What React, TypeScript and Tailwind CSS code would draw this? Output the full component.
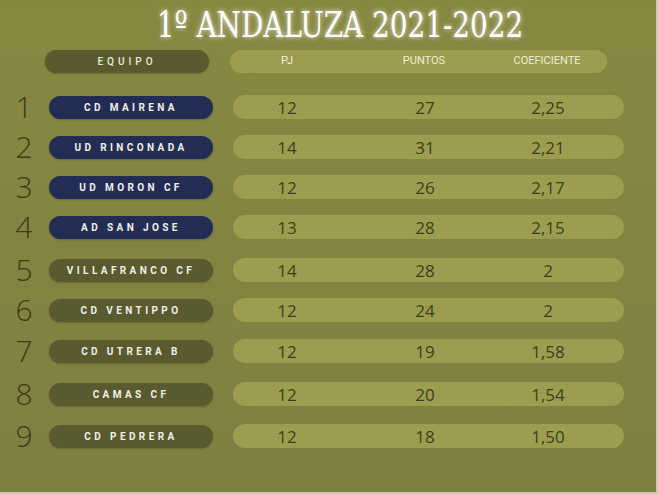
const teams = [
  { pos: 1, name: 'CD MAIRENA', pj: 12, pts: 27, coef: '2,25', top: true, mt: 'mt-0' },
  { pos: 2, name: 'UD RINCONADA', pj: 14, pts: 31, coef: '2,21', top: true, mt: 'mt-0' },
  { pos: 3, name: 'UD MORON CF', pj: 12, pts: 26, coef: '2,17', top: true, mt: 'mt-0' },
  { pos: 4, name: 'AD SAN JOSE', pj: 13, pts: 28, coef: '2,15', top: true, mt: 'mt-0' },
  { pos: 5, name: 'VILLAFRANCO CF', pj: 14, pts: 28, coef: '2', top: false, mt: 'mt-[3px]' },
  { pos: 6, name: 'CD VENTIPPO', pj: 12, pts: 24, coef: '2', top: false, mt: 'mt-0' },
  { pos: 7, name: 'CD UTRERA B', pj: 12, pts: 19, coef: '1,58', top: false, mt: 'mt-px' },
  { pos: 8, name: 'CAMAS CF', pj: 12, pts: 20, coef: '1,54', top: false, mt: 'mt-[3px]' },
  { pos: 9, name: 'CD PEDRERA', pj: 12, pts: 18, coef: '1,50', top: false, mt: 'mt-[2px]' },
];

export default function App() {
  return (
    <div className="w-[658px] h-[494px] overflow-hidden bg-[#c9cbb4]">
      <div className="w-[656px] h-[492px] bg-gradient-to-b from-[#878840] to-[#7e8042] font-['Open_Sans',sans-serif]">
        {/* Title */}
        <div className="flex justify-center pt-[4px] pl-[24px] h-[50px]">
          <h1 className="inline-block scale-x-[0.86] font-['DejaVu_Serif_Condensed','DejaVu_Serif',serif] text-[36px] leading-[42px] text-white [text-shadow:0_0_6px_rgba(255,255,255,0.85)]">
            1º ANDALUZA 2021-2022
          </h1>
        </div>

        {/* Header */}
        <div className="flex items-center pl-[45px]">
          <div className="w-[164px] h-[23px] rounded-full bg-[#595a2e] flex items-center justify-center text-[10px] font-['Roboto',sans-serif] font-medium tracking-[4px] text-[#ecebd8] shadow-[0_1px_2px_rgba(0,0,0,0.2)]">
            EQUIPO
          </div>
          <div className="ml-[21px] w-[377px] h-[23px] rounded-full bg-[#9c9d4f] grid grid-cols-[114px_160px_86px] items-center text-[11px] font-['Liberation_Sans_Narrow','Roboto',sans-serif] text-[#efefd8]">
            <span className="text-center">PJ</span>
            <span className="text-center">PUNTOS</span>
            <span className="text-center">COEFICIENTE</span>
          </div>
        </div>

        {/* Rows */}
        <div className="flex flex-col gap-[16px] mt-[22px]">
          {teams.map((t) => (
            <div key={t.pos} className={`flex items-center h-[24px] ${t.mt}`}>
              <div className="w-[49px] text-center text-[30px] font-light text-[#3a3c1b] leading-none pr-[1px]">{t.pos}</div>
              <div
                className={`w-[164px] h-[23px] rounded-full flex items-center justify-center text-[10px] font-['Roboto',sans-serif] font-bold tracking-[3.4px] text-[#f1f1ea] shadow-[0_1px_2px_rgba(0,0,0,0.2)] ${
                  t.top ? 'bg-[#232c55]' : 'bg-[#595a2e]'
                }`}
              >
                {t.name}
              </div>
              <div className="ml-[20px] w-[391px] h-[24px] rounded-full bg-[#9c9d4f] grid grid-cols-[108px_168px_78px] items-center text-[17px] text-[#3d3f1c]">
                <span className="text-center">{t.pj}</span>
                <span className="text-center">{t.pts}</span>
                <span className="text-center">{t.coef}</span>
              </div>
            </div>
          ))}
        </div>
      </div>
    </div>
  );
}
